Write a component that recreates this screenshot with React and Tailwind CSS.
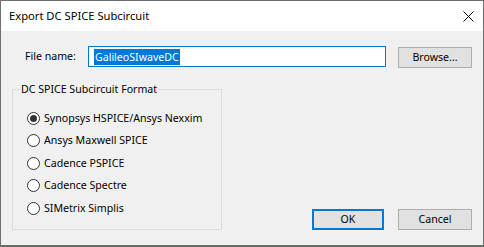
import React from "react";

function Radio({ label, checked }) {
  return (
    <div className="flex items-center h-[22.5px]">
      <div className="w-[13px] h-[13px] rounded-full border border-[#333333] bg-white flex items-center justify-center shrink-0">
        {checked && <div className="w-[7px] h-[7px] rounded-full bg-[#333333]" />}
      </div>
      <span className="ml-[4px] text-[10.6px] text-black leading-none whitespace-nowrap">{label}</span>
    </div>
  );
}

export default function App() {
  const font = { fontFamily: '"Noto Sans", "Liberation Sans", Arial, sans-serif' };
  return (
    <div className="w-[484px] h-[247px] bg-[#5f6b5c]" style={font}>
      <div className="w-[484px] h-[246px] border border-[#6f6f6f] bg-[#f0f0f0] flex flex-col">
        {/* Title bar */}
        <div className="h-[30px] bg-white flex items-center justify-between pl-[8px] pr-[9px] shrink-0">
          <span className="text-[11.2px] text-black whitespace-nowrap">Export DC SPICE Subcircuit</span>
          <svg width="11" height="11" viewBox="0 0 11 11">
            <path d="M0.5 0.5 L10.5 10.5 M10.5 0.5 L0.5 10.5" stroke="#000" strokeWidth="1" />
          </svg>
        </div>
        {/* Content */}
        <div className="flex-1 flex flex-col pl-[11px] pr-[11px]">
          <div className="flex items-center mt-[15px] h-[21px]">
            <span className="ml-[13px] w-[63px] text-[10.6px] text-black whitespace-nowrap">File name:</span>
            <div className="w-[298px] h-[21px] border border-[#0078d7] bg-white flex items-center pl-[5px]">
              <span className="bg-[#0078d7] text-white text-[10.6px] leading-[16px] px-[1px] whitespace-nowrap">GalileoSIwaveDC</span>
            </div>
            <button className="ml-[12px] mt-[2px] w-[74px] h-[21px] border border-[#adadad] bg-[#e1e1e1] text-[10.6px] text-black">
              Browse...
            </button>
          </div>
          <div className="flex items-end mt-[22px]">
            <div className="relative w-[210px] h-[141px] border border-[#dcdcdc] pt-[17px] pl-[14px]">
              <span className="absolute left-[7px] top-[-8px] bg-[#f0f0f0] px-[1px] text-[10.6px] text-black leading-[14px] whitespace-nowrap">
                DC SPICE Subcircuit Format
              </span>
              <div className="flex flex-col">
                <Radio label="Synopsys HSPICE/Ansys Nexxim" checked />
                <Radio label="Ansys Maxwell SPICE" />
                <Radio label="Cadence PSPICE" />
                <Radio label="Cadence Spectre" />
                <Radio label="SIMetrix Simplis" />
              </div>
            </div>
            <button className="ml-[90px] w-[72px] h-[21px] border-2 border-[#0078d7] bg-[#e1e1e1] text-[10.6px] text-black">
              OK
            </button>
            <button className="ml-[14px] w-[74px] h-[21px] border border-[#adadad] bg-[#e1e1e1] text-[10.6px] text-black">
              Cancel
            </button>
          </div>
        </div>
      </div>
    </div>
  );
}
